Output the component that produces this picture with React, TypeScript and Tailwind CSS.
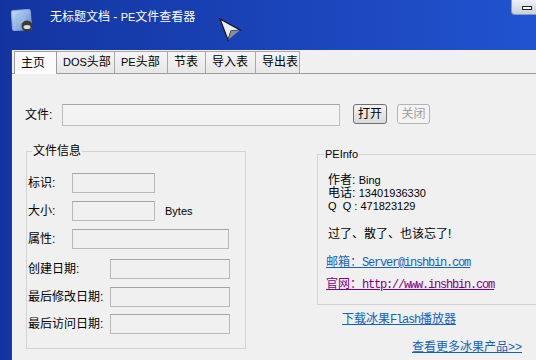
import React from 'react';

const field = "h-[20px] border border-[#b9b9b9] border-t-[#a3a3a3] bg-[#f0f0f0]";
const mono = "font-['Liberation_Mono',monospace] text-[12px] tracking-[-1.2px]";

export default function App() {
  return (
    <div className="relative w-[536px] h-[360px] overflow-hidden bg-linear-to-r from-[#1334a0] to-[#2153d0] font-['Liberation_Sans','Noto_Sans_CJK_SC',sans-serif] text-[12px] text-black">
      {/* title bar */}
      <div className="h-[50px] flex items-start pl-[10px] pt-[9px]">
        <svg width="24" height="24" viewBox="0 0 24 24">
          <defs>
            <linearGradient id="ic" x1="0" y1="0" x2="1" y2="1">
              <stop offset="0" stopColor="#c9dcf4" />
              <stop offset="1" stopColor="#5d8dd0" />
            </linearGradient>
          </defs>
          <rect x="2" y="1" width="19" height="20" rx="2" fill="url(#ic)" stroke="#8aa7d6" transform="rotate(-4 12 12)" />
          <circle cx="10" cy="9" r="4" fill="none" stroke="#9fbde6" strokeWidth="1.5" />
          <circle cx="17" cy="17" r="5.5" fill="#3d3a2c" />
          <ellipse cx="17" cy="18" rx="3.5" ry="2" fill="#d8dee6" />
        </svg>
        <span className="ml-[16px] mt-[1px] text-white leading-[14px]">
          无标题文档 - <span className="text-[11px]">PE</span>文件查看器
        </span>
      </div>

      {/* cursor */}
      <svg className="absolute left-[219px] top-[18px]" width="24" height="24" viewBox="0 0 24 24">
        <polygon points="1,1 21,12 12,13 9,22" fill="#e9edf2" stroke="#101010" strokeWidth="1.2" />
        <polygon points="12,13 21,12 9,22" fill="#8a8f99" />
      </svg>

      {/* top right button */}
      <div className="absolute right-0 top-0 w-[25px] h-[15px] bg-linear-to-b from-[#eef1f5] to-[#c9d1dc] rounded-bl-[4px] border-l border-b border-[#8c9bb5] flex items-center justify-end pr-[4px] pt-[2px]">
        <div className="w-[10px] h-[4px] bg-white border border-[#222]" />
      </div>

      {/* window body */}
      <div className="ml-[11px] h-[310px] bg-[#f0f0f0] border-l border-[#2b3f86] overflow-hidden">
        {/* tabs */}
        <div className="flex items-end pl-[2px] h-[24px] border-b border-[#9c9c9c]">
          <div className="w-[43px] h-[23px] -mb-px bg-[#fbfbfb] border border-b-0 border-[#9c9c9c] pl-[6px] leading-[22px]">主页</div>
          <div className="w-[58px] h-[22px] bg-linear-to-b from-[#f5f5f5] to-[#e7e7e7] border border-b-0 border-l-0 border-[#a8a8a8] pl-[6px] leading-[21px]"><span className="text-[11px]">DOS</span>头部</div>
          <div className="w-[53px] h-[22px] bg-linear-to-b from-[#f5f5f5] to-[#e7e7e7] border border-b-0 border-l-0 border-[#a8a8a8] pl-[6px] leading-[21px]"><span className="text-[11px]">PE</span>头部</div>
          <div className="w-[38px] h-[22px] bg-linear-to-b from-[#f5f5f5] to-[#e7e7e7] border border-b-0 border-l-0 border-[#a8a8a8] pl-[6px] leading-[21px]">节表</div>
          <div className="w-[50px] h-[22px] bg-linear-to-b from-[#f5f5f5] to-[#e7e7e7] border border-b-0 border-l-0 border-[#a8a8a8] pl-[6px] leading-[21px]">导入表</div>
          <div className="w-[44px] h-[22px] bg-linear-to-b from-[#f5f5f5] to-[#e7e7e7] border border-b-0 border-l-0 border-[#a8a8a8] pl-[6px] leading-[21px]">导出表</div>
        </div>

        {/* file row */}
        <div className="flex items-start mt-[30px] pl-[13px]">
          <span className="w-[37px] leading-[22px]">文件:</span>
          <div className="w-[278px] h-[22px] border border-[#bdbdbd] border-t-[#a8a8a8] bg-[#f3f3f3]" />
          <button className="ml-[13px] w-[34px] h-[20px] rounded-[3px] border border-[#707070] bg-linear-to-b from-[#f3f3f3] to-[#dadada] leading-[18px]">打开</button>
          <button className="ml-[10px] w-[33px] h-[20px] rounded-[3px] border border-[#b3b3b3] bg-[#f4f4f4] text-[#9d9d9d] leading-[18px]">关闭</button>
        </div>

        {/* groups */}
        <div className="flex items-start mt-[18px] pl-[14px]">
          <fieldset className="w-[220px] h-[205px] shrink-0 border border-[#d3d3d3]">
            <legend className="ml-[5px] px-[1px] leading-[14px]">文件信息</legend>
            <div className="pl-[1px]">
              <div className="flex items-center mt-[15px]">
                <span className="w-[44px]">标识:</span>
                <div className={`w-[83px] ${field}`} />
              </div>
              <div className="flex items-center mt-[8px]">
                <span className="w-[44px]">大小:</span>
                <div className={`w-[83px] ${field}`} />
                <span className="ml-[10px] text-[11px]">Bytes</span>
              </div>
              <div className="flex items-center mt-[8px]">
                <span className="w-[44px]">属性:</span>
                <div className={`w-[157px] ${field}`} />
              </div>
              <div className="flex items-center mt-[10px]">
                <span className="w-[82px]">创建日期:</span>
                <div className={`w-[120px] ${field}`} />
              </div>
              <div className="flex items-center mt-[8px]">
                <span className="w-[82px]">最后修改日期:</span>
                <div className={`w-[120px] ${field}`} />
              </div>
              <div className="flex items-center mt-[7px]">
                <span className="w-[82px]">最后访问日期:</span>
                <div className={`w-[120px] ${field}`} />
              </div>
            </div>
          </fieldset>

          <div className="ml-[71px] mt-[3px] w-[240px] shrink-0">
            <fieldset className="w-[240px] h-[158px] border border-[#d3d3d3]">
              <legend className="ml-[6px] px-[1px] leading-[14px] text-[11px]">PEInfo</legend>
              <div className="pl-[10px] pt-[13px] leading-[13px]">
                <div>作者: <span className="text-[11px]">Bing</span></div>
                <div>电话: <span className="text-[11px]">13401936330</span></div>
                <div><span className="text-[11px]">Q&nbsp;&nbsp;Q : 471823129</span></div>
                <div className="mt-[14px] leading-[14px]">过了、散了、也该忘了!</div>
                <div className="mt-[14px] leading-[14px] -ml-[2px]">
                  <a className="text-[#1560c0] underline">邮箱：<span className={mono}>Server@inshbin.com</span></a>
                </div>
                <div className="mt-[7px] leading-[14px] -ml-[2px]">
                  <a className="text-[#800080] underline">官网：<span className={mono}>http://www.inshbin.com</span></a>
                </div>
              </div>
            </fieldset>
            <div className="mt-[7px] ml-[25px] leading-[14px]">
              <a className="text-[#1560c0] underline">下载冰果<span className={mono}>Flash</span>播放器</a>
            </div>
            <div className="mt-[13px] ml-[95px] leading-[14px] whitespace-nowrap">
              <a className="text-[#1560c0] underline">查看更多冰果产品&gt;&gt;</a>
            </div>
          </div>
        </div>
      </div>
    </div>
  );
}
